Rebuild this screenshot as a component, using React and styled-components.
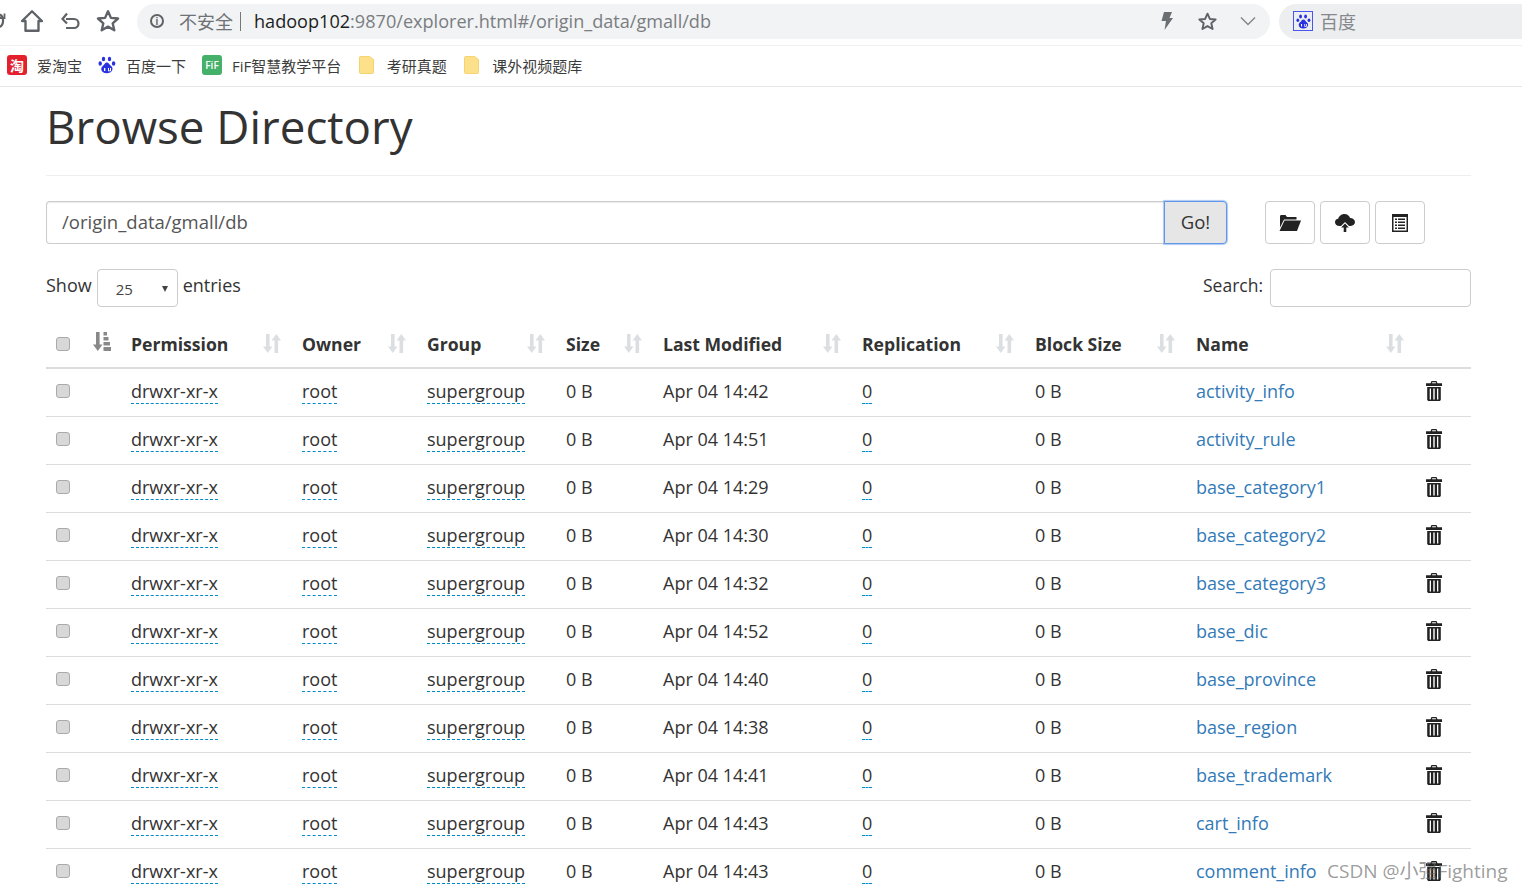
import styled, { createGlobalStyle } from "styled-components";

const GlobalStyle = createGlobalStyle`
  html, body {
    margin: 0;
    height: 890px;
    overflow: hidden;
    background: #fff;
  }
  body {
    font-family: "Open Sans", "Noto Sans CJK SC", sans-serif;
    color: #333;
  }
  * { box-sizing: border-box; }
`;

const files = [
  ["14:42", "activity_info"],
  ["14:51", "activity_rule"],
  ["14:29", "base_category1"],
  ["14:30", "base_category2"],
  ["14:32", "base_category3"],
  ["14:52", "base_dic"],
  ["14:40", "base_province"],
  ["14:38", "base_region"],
  ["14:41", "base_trademark"],
  ["14:43", "cart_info"],
  ["14:43", "comment_info"],
];

const columns = [
  ["Permission", 171],
  ["Owner", 125],
  ["Group", 139],
  ["Size", 97],
  ["Last Modified", 199],
  ["Replication", 173],
  ["Block Size", 161],
  ["Name", 229],
];

function SortIcon({ active }) {
  const color = active ? "#888" : "#dcdfe2";
  return (
    <svg width="18" height="19" viewBox="0 0 18 19">
      <path d="M3 0h3.600v12.500H9.500L4.800 19 0 12.500h3z" fill={color} />
      {active ? (
        <path d="M10.500 0h3.500v3.500h-3.500zM10.500 5h5v3.500h-5zM10.500 10h6.500v3.500h-6.500zM10.500 15h7.500v4h-7.500z" fill={color} />
      ) : (
        <path d="M11.500 19h3.600V6.500H18L13.300 0 8.500 6.500h3z" fill={color} />
      )}
    </svg>
  );
}

function TrashIcon() {
  return (
    <svg width="16" height="20" viewBox="0 0 16 20">
      <path d="M5.500 0h5l1 2.200H16V5H0V2.200h4.500zM6.300 1.200l-.4 1h4.200l-.4-1z" fill="#222" fillRule="evenodd" />
      <path d="M1.200 6h13.600v13l-1 1H2.200l-1-1zM3.700 7.500V18.500h1.300V7.500zM7.300 7.500V18.500h1.400V7.500zM11 7.500V18.500h1.300V7.500z" fill="#222" fillRule="evenodd" />
    </svg>
  );
}

function FolderOpenIcon() {
  return (
    <svg width="22" height="17" viewBox="0 0 22 17">
      <path d="M1 2.500C1 1.500 1.500 1 2.500 1h4l1.500 2h9.500v2.500H5L1 13.500z" fill="#222" />
      <path d="M5.500 6.500H22L18 17H.5z" fill="#222" />
    </svg>
  );
}

function CloudUploadIcon() {
  return (
    <svg width="20" height="18" viewBox="0 0 20 18">
      <path d="M4.500 12C2 12 0 10.500 0 8.200 0 6.300 1.400 5 3.200 4.800 3.800 2.200 6.300 0 9.500 0c2.800 0 4.900 1.700 5.600 4 2.800 0 4.900 1.700 4.900 4.100 0 2.200-1.800 3.900-4.300 3.900h-1.700L10 8 6 12z" fill="#222" />
      <path d="M10 9.500l3.800 4h-2.500V18H8.700v-4.500H6.200z" fill="#222" />
    </svg>
  );
}

function ListIcon() {
  return (
    <svg width="16" height="18" viewBox="0 0 16 18">
      <path d="M0 0h16v18H0zM1.500 3v13.500h13V3z" fill="#222" fillRule="evenodd" />
      <path d="M3 4.500h2V6H3zM6 4.500h7V6H6zM3 7.500h2V9H3zM6 7.500h7V9H6zM3 10.500h2V12H3zM6 10.500h7V12H6zM3 13.500h2V15H3zM6 13.500h7V15H6z" fill="#222" />
    </svg>
  );
}

function ChromeStar({ size = 24, color = "#5f6368" }) {
  return (
    <svg width={size} height={size} viewBox="0 0 24 24" fill="none" stroke={color} strokeWidth="2.200" strokeLinejoin="round">
      <path d="M12 3l2.700 6.100 6.600.6-5 4.400 1.500 6.500L12 17.200l-5.800 3.400 1.500-6.500-5-4.400 6.600-.6z" />
    </svg>
  );
}

function BaiduPaw({ size = 18 }) {
  return (
    <svg width={size} height={size} viewBox="0 0 18 18" fill="#2932e1">
      <ellipse cx="5.500" cy="3" rx="1.700" ry="2.300" />
      <ellipse cx="11.500" cy="3" rx="1.700" ry="2.300" />
      <ellipse cx="2.200" cy="7.500" rx="1.700" ry="2.200" />
      <ellipse cx="15.600" cy="7.500" rx="1.700" ry="2.200" />
      <path d="M8.800 6.500c2 0 2.500 2.200 4 3.300 1.700 1.300 2 2.700 1.500 4.300-.5 2-2.500 3.200-5.500 3.200-3.200 0-5-1.200-5.400-3.200-.4-1.700 0-3 1.600-4.300C6.400 8.700 7 6.500 8.800 6.500z" />
      <path d="M6 12h1.300v3H6zM10 12h1v2.500h1V12h1v3.300h-3z" fill="#fff" />
    </svg>
  );
}

function FolderBookmark() {
  return (
    <svg width="16" height="18" viewBox="0 0 16 18">
      <path d="M1.500 0.500h9l4 3v13a1 1 0 0 1-1 1h-12a1 1 0 0 1-1-1v-15a1 1 0 0 1 1-1z" fill="#fde08a" stroke="#f6d270" />
    </svg>
  );
}

export default function App() {
  return (
    <Page>
      <GlobalStyle />
      <BrowserBar>
        <NavIcons>
          <svg width="6" height="18" viewBox="0 0 6 18" fill="none" stroke="#5f6368" strokeWidth="2.200">
            <path d="M0 2.500a7 7 0 0 1 3 6.500 7 7 0 0 1-3 6" />
            <path d="M0 6h4.500V1.500" strokeWidth="1.800" />
          </svg>
          <svg width="26" height="26" viewBox="0 0 24 24" fill="none" stroke="#5f6368" strokeWidth="2.200" strokeLinejoin="round">
            <path d="M12 3L2.800 12H6v9h12v-9h3.200z" />
          </svg>
          <svg width="24" height="24" viewBox="0 0 24 24" fill="none" stroke="#5f6368" strokeWidth="2.200">
            <path d="M8 10h8a4.500 4.500 0 0 1 0 9H8" />
            <path d="M9 4L4.500 9.500 9 14" transform="translate(0 .5)" />
          </svg>
          <ChromeStar size={26} />
        </NavIcons>
        <Omnibox>
          <InfoIcon>i</InfoIcon>
          <Insecure>不安全</Insecure>
          <Divider />
          <Host>hadoop102</Host>
          <UrlRest>:9870/explorer.html#/origin_data/gmall/db</UrlRest>
          <OmniActions>
            <svg width="14" height="20" viewBox="0 0 14 20" fill="#6b6e72">
              <path d="M4 1h8L9.500 7H13l-8.500 12L6 10H1.500z" />
            </svg>
            <ChromeStar size={21} />
            <svg width="18" height="18" viewBox="0 0 18 18" fill="none" stroke="#85888c" strokeWidth="1.500">
              <path d="M2 5.500l7 7 7-7" />
            </svg>
          </OmniActions>
        </Omnibox>
        <SearchBox>
          <BaiduFrame>
            <BaiduPaw size={15} />
          </BaiduFrame>
          <span>百度</span>
        </SearchBox>
      </BrowserBar>

      <Bookmarks>
        <Bookmark>
          <TaoIcon>淘</TaoIcon>
          爱淘宝
        </Bookmark>
        <Bookmark>
          <BaiduPaw />
          百度一下
        </Bookmark>
        <Bookmark>
          <FifIcon>FiF</FifIcon>
          FiF智慧教学平台
        </Bookmark>
        <Bookmark $folder>
          <FolderBookmark />
          考研真题
        </Bookmark>
        <Bookmark $folder>
          <FolderBookmark />
          课外视频题库
        </Bookmark>
      </Bookmarks>

      <Content>
        <Title>Browse Directory</Title>
        <Rule />
        <PathRow>
          <PathGroup>
            <PathInput readOnly value="/origin_data/gmall/db" />
            <GoButton>Go!</GoButton>
          </PathGroup>
          <ToolButtons>
            <ToolButton><FolderOpenIcon /></ToolButton>
            <ToolButton><CloudUploadIcon /></ToolButton>
            <ToolButton><ListIcon /></ToolButton>
          </ToolButtons>
        </PathRow>

        <ControlsRow>
          <ShowLabel>
            Show
            <EntriesSelect>25</EntriesSelect>
            entries
          </ShowLabel>
          <SearchLabel>
            Search:
            <SearchInput />
          </SearchLabel>
        </ControlsRow>

        <Table>
          <colgroup>
            <col width="39" />
            <col width="38" />
            {columns.map(([label, width]) => <col key={label} width={width} />)}
            <col width="54" />
          </colgroup>
          <thead>
            <tr>
              <HeadCell $first><CheckBox /></HeadCell>
              <HeadCell><SortIcon active /></HeadCell>
              {columns.map(([label]) => (
                <HeadCell key={label}>
                  <HeadInner>
                    {label}
                    <SortIcon />
                  </HeadInner>
                </HeadCell>
              ))}
              <HeadCell />
            </tr>
          </thead>
          <tbody>
            {files.map(([time, name]) => (
              <tr key={name}>
                <Cell $first><CheckBox /></Cell>
                <Cell />
                <Cell><Editable>drwxr-xr-x</Editable></Cell>
                <Cell><Editable>root</Editable></Cell>
                <Cell><Editable>supergroup</Editable></Cell>
                <Cell>0 B</Cell>
                <Cell>Apr 04 {time}</Cell>
                <Cell><Editable>0</Editable></Cell>
                <Cell>0 B</Cell>
                <Cell><FileLink>{name}</FileLink></Cell>
                <Cell><TrashWrap><TrashIcon /></TrashWrap></Cell>
              </tr>
            ))}
          </tbody>
        </Table>
      </Content>

      <Watermark>CSDN @小强Fighting</Watermark>
    </Page>
  );
}

const Page = styled.div`
  position: relative;
  width: 1522px;
  height: 890px;
  overflow: hidden;
`;

const BrowserBar = styled.div`
  display: flex;
  align-items: center;
  height: 46px;
  padding: 4px 0 7px;
  border-bottom: 1px solid #f0f1f2;
`;

const NavIcons = styled.div`
  display: flex;
  align-items: center;
  gap: 13px;
  width: 137px;
  flex: none;
`;

const Omnibox = styled.div`
  display: flex;
  align-items: center;
  width: 1133px;
  height: 35px;
  padding-left: 13px;
  background: #f1f3f4;
  border-radius: 18px;
  font-size: 18.100px;
`;

const InfoIcon = styled.span`
  display: flex;
  align-items: center;
  justify-content: center;
  width: 14px;
  height: 14px;
  border: 2px solid #5f6368;
  border-radius: 50%;
  color: #5f6368;
  font-size: 10px;
  font-weight: 700;
  font-family: "Liberation Sans", sans-serif;
  margin-right: 15px;
`;

const Insecure = styled.span`
  color: #6e7175;
  font-size: 18px;
`;

const Divider = styled.span`
  width: 1px;
  height: 19px;
  background: #777;
  margin: 0 13px 0 7px;
`;

const Host = styled.span`
  color: #1c1e21;
`;

const UrlRest = styled.span`
  color: #7a7d81;
`;

const OmniActions = styled.div`
  display: flex;
  align-items: center;
  gap: 23px;
  margin-left: auto;
  margin-right: 13px;

  svg:last-child {
    margin-left: -2px;
  }
`;

const SearchBox = styled.div`
  display: flex;
  align-items: center;
  gap: 7px;
  flex: 1;
  height: 35px;
  margin-left: 9px;
  padding-left: 14px;
  background: #edeef0;
  border-radius: 18px 0 0 18px;
  color: #85888c;
  font-size: 18px;
`;

const BaiduFrame = styled.span`
  display: flex;
  align-items: center;
  justify-content: center;
  width: 20px;
  height: 20px;
  border: 1px solid #4a55ee;
`;

const Bookmarks = styled.div`
  display: flex;
  align-items: center;
  height: 41px;
  padding: 0 0 2px 7px;
  gap: 16px;
  border-bottom: 1px solid #e6e6e6;
`;

const Bookmark = styled.div`
  display: flex;
  align-items: center;
  gap: ${(p) => (p.$folder ? "12px" : "10px")};
  margin-left: ${(p) => (p.$folder ? "1.500px" : "0")};
  font-size: 15px;
  color: #3c3c3c;
`;

const TaoIcon = styled.span`
  display: flex;
  align-items: center;
  justify-content: center;
  width: 20px;
  height: 20px;
  background: #e3202c;
  border-radius: 3px;
  color: #fff;
  font-size: 14px;
  font-weight: 700;
`;

const FifIcon = styled.span`
  display: flex;
  align-items: center;
  justify-content: center;
  width: 20px;
  height: 20px;
  background: #45b06a;
  border-radius: 3px;
  color: #fff;
  font-size: 10px;
  font-weight: 600;
`;

const Content = styled.div`
  padding: 0 51px 0 46px;
`;

const Title = styled.h1`
  margin: 0;
  height: 88px;
  font-size: 45.700px;
  font-weight: 400;
  line-height: 78px;
  color: #333;
`;

const Rule = styled.div`
  height: 1px;
  background: #eee;
`;

const PathRow = styled.div`
  display: flex;
  align-items: center;
  margin-top: 25px;
`;

const PathGroup = styled.div`
  display: flex;
  width: 1181px;
  height: 43px;
`;

const PathInput = styled.input`
  flex: 1;
  min-width: 0;
  padding: 0 15px 2px;
  border: 1px solid #ccc;
  border-right: 0;
  border-radius: 4px 0 0 4px;
  box-shadow: inset 0 1px 1px rgba(0, 0, 0, 0.08);
  font: inherit;
  font-size: 18.500px;
  color: #555;
  outline: none;
`;

const GoButton = styled.button`
  width: 63px;
  padding: 0 0 2px;
  border: 1px solid #5f96ea;
  border-radius: 0 4px 4px 0;
  box-shadow: 0 0 1px 1px rgba(95, 150, 234, 0.5);
  background: #e6e6e6;
  font: inherit;
  font-size: 18.500px;
  color: #333;
`;

const ToolButtons = styled.div`
  display: flex;
  gap: 5px;
  margin-left: 38px;
`;

const ToolButton = styled.button`
  display: flex;
  align-items: center;
  justify-content: center;
  width: 50px;
  height: 43px;
  padding: 0;
  border: 1px solid #ccc;
  border-radius: 4px;
  background: #fff;
`;

const ControlsRow = styled.div`
  display: flex;
  align-items: flex-start;
  justify-content: space-between;
  margin-top: 25px;
  height: 38px;
  font-size: 18px;
  line-height: 33px;
`;

const ShowLabel = styled.div`
  display: flex;
  gap: 5px;
`;

const EntriesSelect = styled.div`
  position: relative;
  display: flex;
  align-items: center;
  width: 81px;
  height: 38px;
  padding: 2px 0 0 18px;
  border: 1px solid #ccc;
  border-radius: 4px;
  font-size: 15px;
  color: #444;

  &::after {
    content: "";
    position: absolute;
    right: 9px;
    top: 16px;
    border-left: 3.500px solid transparent;
    border-right: 3.500px solid transparent;
    border-top: 6px solid #444;
  }
`;

const SearchLabel = styled.div`
  display: flex;
  gap: 7px;
  font-size: 17.500px;
`;

const SearchInput = styled.div`
  width: 201px;
  height: 38px;
  border: 1px solid #ccc;
  border-radius: 4px;
`;

const Table = styled.table`
  width: 1425px;
  margin-top: 13px;
  border-collapse: collapse;
  table-layout: fixed;
  font-size: 18px;
`;

const HeadCell = styled.th`
  height: 48px;
  padding: 0 8px 0 ${(p) => (p.$first ? "10px" : "8px")};
  border-bottom: 2px solid #ddd;
  text-align: left;
  font-size: 17.600px;
  font-weight: 700;
  white-space: nowrap;
`;

const HeadInner = styled.div`
  display: flex;
  align-items: center;
  justify-content: space-between;
  padding-right: 5px;
`;

const Cell = styled.td`
  height: 48px;
  padding: 0 8px 2px ${(p) => (p.$first ? "10px" : "8px")};
  border-bottom: 1px solid #ddd;
  white-space: nowrap;
`;

const CheckBox = styled.span`
  display: block;
  width: 14px;
  height: 14px;
  border: 1px solid #aaa;
  border-radius: 3px;
  background: #d8d8d8;
`;

const Editable = styled.span`
  display: inline-block;
  line-height: 24px;
  border-bottom: 1px dashed #0088cc;
`;

const FileLink = styled.span`
  color: #337ab7;
`;

const TrashWrap = styled.div`
  display: flex;
  padding-left: 1px;
  margin-top: -1px;
`;

const Watermark = styled.div`
  position: absolute;
  left: 1327px;
  top: 856px;
  font-size: 19px;
  color: rgba(100, 100, 100, 0.65);
  white-space: nowrap;
`;
